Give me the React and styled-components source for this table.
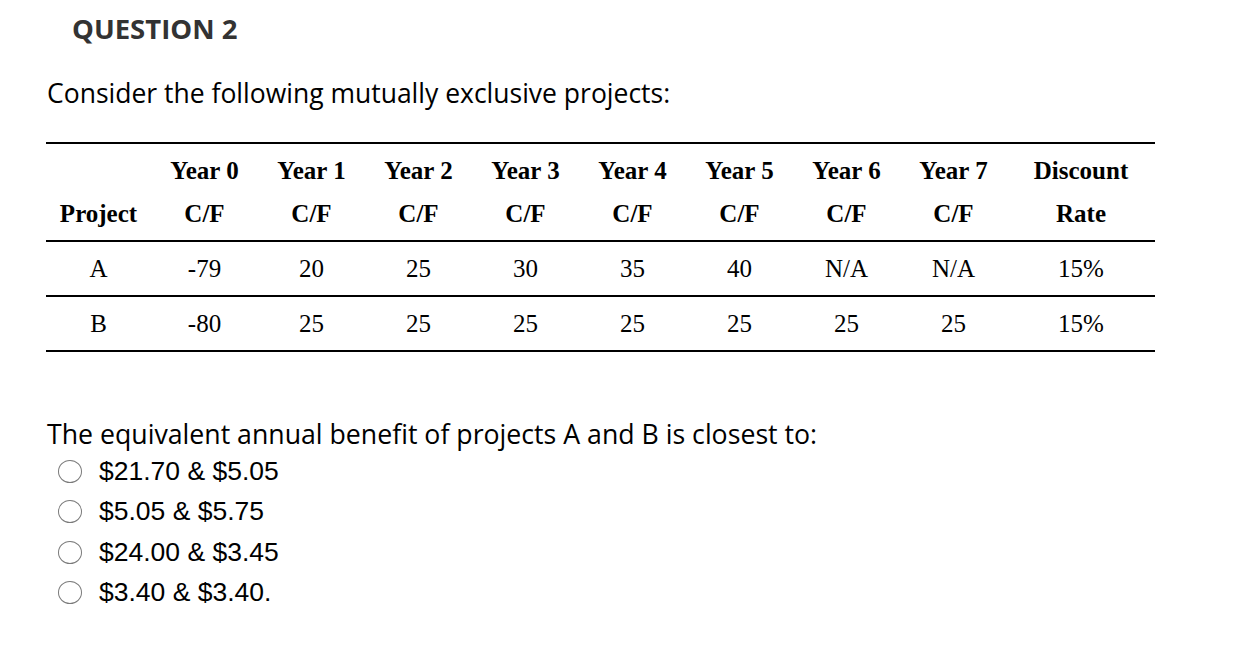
import React from 'react';
import styled, { createGlobalStyle } from 'styled-components';

const GlobalStyle = createGlobalStyle`
  body {
    margin: 0;
    background: #ffffff;
  }
`;

const columns = ['Year 0', 'Year 1', 'Year 2', 'Year 3', 'Year 4', 'Year 5', 'Year 6', 'Year 7'];

const rows = [
  { name: 'A', flows: ['-79', '20', '25', '30', '35', '40', 'N/A', 'N/A'], rate: '15%' },
  { name: 'B', flows: ['-80', '25', '25', '25', '25', '25', '25', '25'], rate: '15%' },
];

const answers = ['$21.70 & $5.05', '$5.05 & $5.75', '$24.00 & $3.45', '$3.40 & $3.40.'];

export default function App() {
  return (
    <Page>
      <GlobalStyle />
      <Title>QUESTION 2</Title>
      <Prompt>Consider the following mutually exclusive projects:</Prompt>

      <Table>
        <colgroup>
          <col style={{ width: 105 }} />
          {columns.map(c => <col key={c} style={{ width: 107 }} />)}
          <col />
        </colgroup>
        <thead>
          <tr>
            <HeadCell><br />Project</HeadCell>
            {columns.map(c => (
              <HeadCell key={c}>{c}<br />C/F</HeadCell>
            ))}
            <HeadCell>Discount<br />Rate</HeadCell>
          </tr>
        </thead>
        <tbody>
          {rows.map(r => (
            <tr key={r.name}>
              <Cell>{r.name}</Cell>
              {r.flows.map((f, i) => <Cell key={i}>{f}</Cell>)}
              <Cell>{r.rate}</Cell>
            </tr>
          ))}
        </tbody>
      </Table>

      <Question>The equivalent annual benefit of projects A and B is closest to:</Question>
      <Answers>
        {answers.map(a => (
          <Answer key={a}>
            <Radio />
            <span>{a}</span>
          </Answer>
        ))}
      </Answers>
    </Page>
  );
}

const Page = styled.div`
  padding: 13px 0 0 46px;
  width: 1109px;
`;

const Title = styled.h2`
  margin: 0 0 0 26px;
  font-family: "Open Sans", sans-serif;
  font-weight: 700;
  font-size: 27.5px;
  line-height: 32px;
  color: #333333;
`;

const Prompt = styled.p`
  margin: 32px 0 0 1px;
  font-family: "Open Sans", sans-serif;
  font-size: 26.5px;
  line-height: 32px;
  color: #000000;
`;

const Table = styled.table`
  margin-top: 33px;
  width: 1109px;
  table-layout: fixed;
  border-collapse: collapse;
  border-top: 2px solid #000;
  border-bottom: 2px solid #000;
  font-family: "Liberation Serif", "Times New Roman", serif;
  color: #000;
`;

const HeadCell = styled.th`
  padding: 5px 0;
  line-height: 43px;
  font-size: 25px;
  font-weight: 700;
  text-align: center;
  vertical-align: bottom;
  border-bottom: 2px solid #000;
`;

const Cell = styled.td`
  height: 53px;
  padding: 0;
  font-size: 25px;
  text-align: center;
  vertical-align: middle;
  border-bottom: 2px solid #000;
`;

const Question = styled.p`
  margin: 66px 0 0 1px;
  font-family: "Open Sans", sans-serif;
  font-size: 26.7px;
  line-height: 32px;
  color: #000;
`;

const Answers = styled.div`
  display: flex;
  flex-direction: column;
  margin-top: 1px;
  padding-left: 12px;
`;

const Answer = styled.label`
  display: flex;
  align-items: center;
  gap: 17px;
  height: 40.5px;
  font-family: "Liberation Sans", Arial, sans-serif;
  font-size: 26.5px;
  color: #000;
`;

const Radio = styled.span`
  box-sizing: border-box;
  width: 24px;
  height: 23px;
  border: 1.5px solid #7a7a7a;
  border-radius: 50%;
  flex-shrink: 0;
`;
